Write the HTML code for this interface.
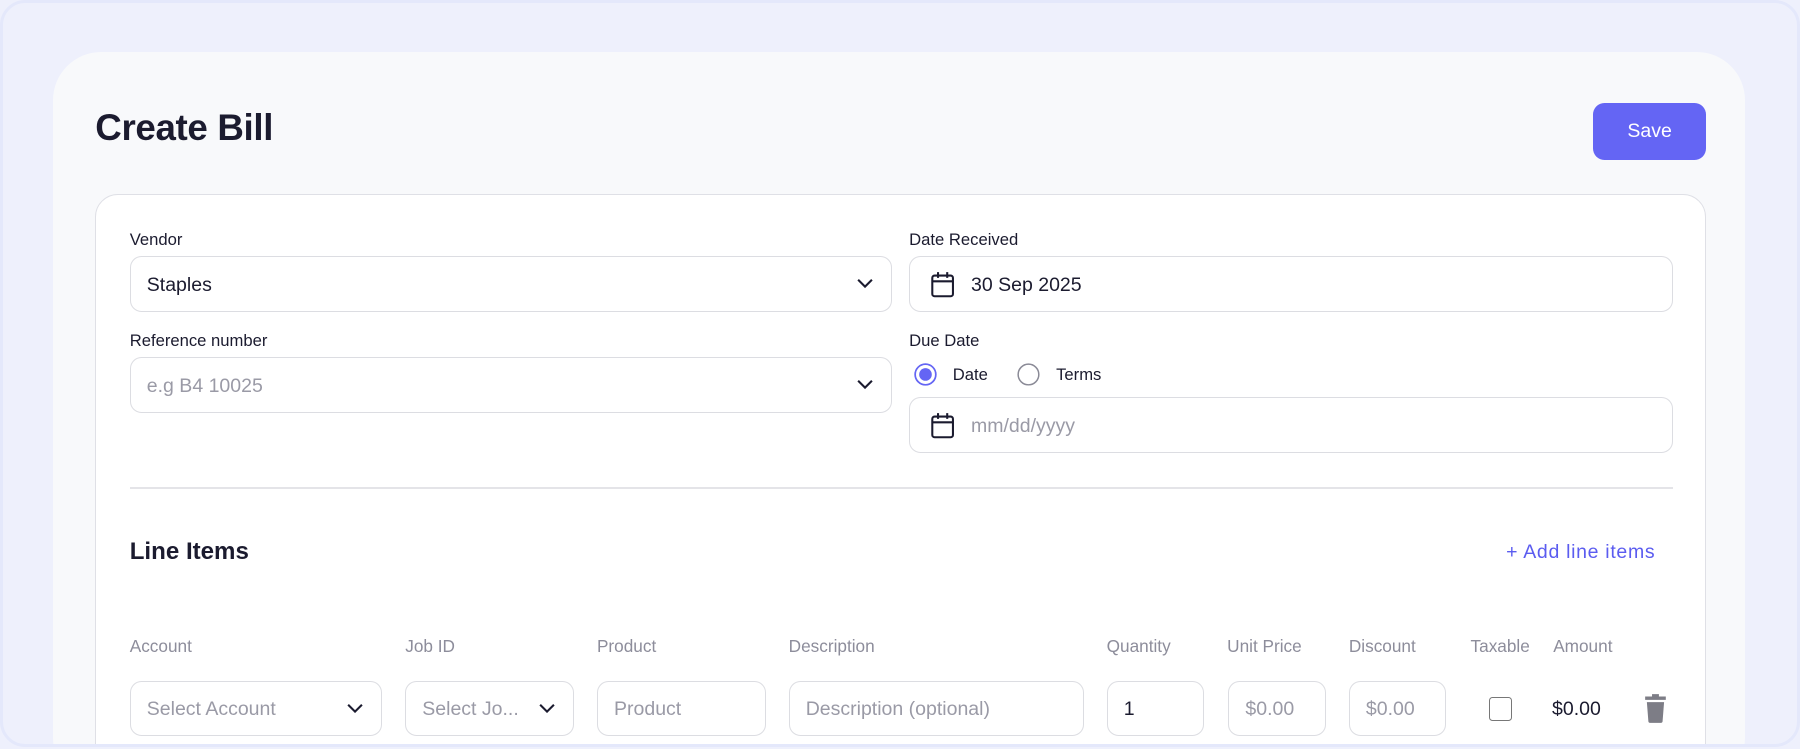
<!DOCTYPE html>
<html><head><meta charset="utf-8"><style>
*{box-sizing:border-box;margin:0;padding:0}
html,body{width:1800px;height:749px;overflow:hidden;background:#eef0fc}
#z{zoom:1.14796;width:1568px;height:653px;position:relative;font-family:"Liberation Sans",sans-serif;color:#1b1b2f}
.clip{position:absolute;left:0;top:0;width:1568px;height:651px;background:#eef0fc;border-radius:22px;overflow:hidden}
.over{position:absolute;left:0;top:0;width:1568px;height:651px;border:3px solid #e4e8fb;border-radius:22px;z-index:10}
.panel{position:absolute;left:46px;top:45px;width:1474px;height:640px;background:#f8f9fb;border-radius:42px}
.abs{position:absolute}
h1{position:absolute;left:83px;top:93px;font-size:32px;font-weight:700;letter-spacing:-0.3px;color:#1b1b2f}
.save{position:absolute;left:1388px;top:90px;width:98px;height:49px;background:#6465f4;border-radius:10px;color:#fff;font-size:17px;text-align:center;line-height:49px}
.card{position:absolute;left:83px;top:169px;width:1403px;height:520px;background:#fff;border:1px solid #dfe0e6;border-radius:20px}
.lbl{position:absolute;font-size:14.5px;color:#1b1b2f}
.in{position:absolute;border:1.5px solid #dcdde2;border-radius:10px;background:#fff;font-size:17px;color:#1b1b2f;display:flex;align-items:center;padding-left:14px;padding-top:2px}
.ph{color:#9a9aa6}
.chev{position:absolute;right:16px;top:50%;margin-top:-5px}
.hd{position:absolute;top:554px;font-size:15px;color:#8d8d9b}
</style></head><body><div id="z">
<div class="clip">
<div class="panel"></div>
<h1>Create Bill</h1>
<div class="save">Save</div>
<div class="card"></div>

<div class="lbl" style="left:113px;top:200px">Vendor</div>
<div class="in" style="left:113px;top:223px;width:664px;height:49px">Staples<svg class="chev" width="14" height="9" viewBox="0 0 14 9"><path d="M1 1.5l6 6 6-6" fill="none" stroke="#1b1b2f" stroke-width="1.8"/></svg></div>

<div class="lbl" style="left:792px;top:200px">Date Received</div>
<div class="in" style="left:792px;top:223px;width:665px;height:49px;padding-left:53px"><svg class="abs" style="left:17px;top:12px" width="22" height="24" viewBox="0 0 22 24"><rect x="2" y="4" width="18" height="18" rx="2" fill="none" stroke="#1b1b2f" stroke-width="1.8"/><path d="M2 9h18M7 1v5M15 1v5" stroke="#1b1b2f" stroke-width="1.8"/></svg>30 Sep 2025</div>

<div class="lbl" style="left:113px;top:288px">Reference number</div>
<div class="in ph" style="left:113px;top:311px;width:664px;height:49px">e.g B4 10025<svg class="chev" width="14" height="9" viewBox="0 0 14 9"><path d="M1 1.5l6 6 6-6" fill="none" stroke="#1b1b2f" stroke-width="1.8"/></svg></div>

<div class="lbl" style="left:792px;top:288px">Due Date</div>
<svg class="abs" style="left:796px;top:316px" width="20" height="20"><circle cx="10" cy="10" r="9" fill="#fff" stroke="#6465f4" stroke-width="1.5"/><circle cx="10" cy="10" r="5.5" fill="#6465f4"/></svg>
<div class="lbl" style="left:830px;top:318px">Date</div>
<svg class="abs" style="left:886px;top:316px" width="20" height="20"><circle cx="10" cy="10" r="9" fill="#fff" stroke="#8a8a96" stroke-width="1.3"/></svg>
<div class="lbl" style="left:920px;top:318px">Terms</div>
<div class="in ph" style="left:792px;top:346px;width:665px;height:49px;padding-left:53px"><svg class="abs" style="left:17px;top:12px" width="22" height="24" viewBox="0 0 22 24"><rect x="2" y="4" width="18" height="18" rx="2" fill="none" stroke="#1b1b2f" stroke-width="1.8"/><path d="M2 9h18M7 1v5M15 1v5" stroke="#1b1b2f" stroke-width="1.8"/></svg>mm/dd/yyyy</div>

<div class="abs" style="left:113px;top:424px;width:1344px;height:2px;background:#e4e4e8"></div>

<div class="abs" style="left:113px;top:469px;font-size:21px;font-weight:700">Line Items</div>
<div class="abs" style="left:1312px;top:471px;font-size:17px;color:#5b5cf0;letter-spacing:0.6px">+ Add line items</div>

<div class="hd" style="left:113px">Account</div>
<div class="hd" style="left:353px">Job ID</div>
<div class="hd" style="left:520px">Product</div>
<div class="hd" style="left:687px">Description</div>
<div class="hd" style="left:964px">Quantity</div>
<div class="hd" style="left:1069px">Unit Price</div>
<div class="hd" style="left:1175px">Discount</div>
<div class="hd" style="left:1281px">Taxable</div>
<div class="hd" style="left:1353px">Amount</div>

<div class="in ph" style="left:113px;top:593px;width:220px;height:48px">Select Account<svg class="chev" width="14" height="9" viewBox="0 0 14 9"><path d="M1 1.5l6 6 6-6" fill="none" stroke="#1b1b2f" stroke-width="1.8"/></svg></div>
<div class="in ph" style="left:353px;top:593px;width:147px;height:48px">Select Jo...<svg class="chev" width="14" height="9" viewBox="0 0 14 9"><path d="M1 1.5l6 6 6-6" fill="none" stroke="#1b1b2f" stroke-width="1.8"/></svg></div>
<div class="in ph" style="left:520px;top:593px;width:147px;height:48px">Product</div>
<div class="in ph" style="left:687px;top:593px;width:257px;height:48px">Description (optional)</div>
<div class="in" style="left:964px;top:593px;width:85px;height:48px">1</div>
<div class="in ph" style="left:1070px;top:593px;width:85px;height:48px">$0.00</div>
<div class="in ph" style="left:1175px;top:593px;width:85px;height:48px">$0.00</div>
<div class="abs" style="left:1297px;top:607px;width:20px;height:21px;border:1.5px solid #777;border-radius:3px"></div>
<div class="abs" style="left:1352px;top:608px;font-size:17px">$0.00</div>
<svg class="abs" style="left:1432px;top:604px" width="20" height="26" viewBox="0 0 20 26"><path d="M7 1h6v2h6v3H1V3h6z" fill="#7d7d86"/><path d="M2.5 8h15l-1.3 16.5a1.5 1.5 0 0 1-1.5 1.5H5.3a1.5 1.5 0 0 1-1.5-1.5z" fill="#7d7d86"/></svg>
</div>
<div class="over"></div>
</div></body></html>
